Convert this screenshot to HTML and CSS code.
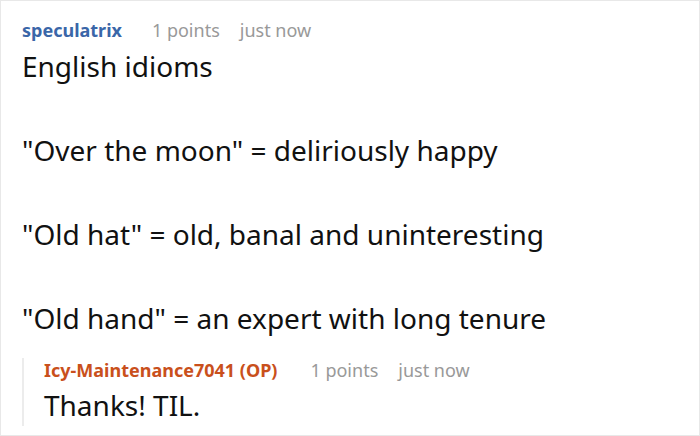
FILE: index.html
```html
<!DOCTYPE html>
<html>
<head>
<meta charset="utf-8">
<link rel="stylesheet" href="styles.css">
</head>
<body>
<div class="frame">
  <div class="comment">
    <div class="meta">
      <span class="author">speculatrix</span>
      <span class="info">1 points</span>
      <span class="info">just now</span>
    </div>
    <div class="body">
      <p>English idioms</p>
      <p>"Over the moon" = deliriously happy</p>
      <p>"Old hat" = old, banal and uninteresting</p>
      <p>"Old hand" = an expert with long tenure</p>
    </div>
    <div class="reply">
      <div class="meta">
        <span class="author op">Icy-Maintenance7041 (OP)</span>
        <span class="info">1 points</span>
        <span class="info">just now</span>
      </div>
      <div class="body">
        <p>Thanks! TIL.</p>
      </div>
    </div>
  </div>
</div>
</body>
</html>
```

FILE: styles.css
```css
html, body {
  margin: 0;
  padding: 0;
  background: #fff;
}
.frame {
  width: 700px;
  height: 436px;
  box-sizing: border-box;
  border: 1px solid #e8e8e8;
  overflow: hidden;
  font-family: "Noto Sans", "Open Sans", sans-serif;
}
.comment {
  padding: 17px 0 0 21px;
}
.meta {
  display: flex;
  gap: 20px;
  font-size: 18px;
  line-height: 24px;
  align-items: baseline;
}
.author {
  font-weight: 700;
  color: #3a66a8;
  margin-right: 10px;
}
.author.op {
  color: #c9501c;
  margin-right: 13px;
}
.info {
  color: #999;
}
.body {
  margin-top: 3px;
  font-size: 28px;
  line-height: 42px;
  color: #111;
}
.body p {
  margin: 0 0 42px 0;
}
.body p:last-child {
  margin-bottom: 0;
}
.reply {
  margin-top: 19px;
  border-left: 2px solid #ececec;
  padding-left: 20px;
}
.reply .body {
  margin-top: 2px;
}
```
